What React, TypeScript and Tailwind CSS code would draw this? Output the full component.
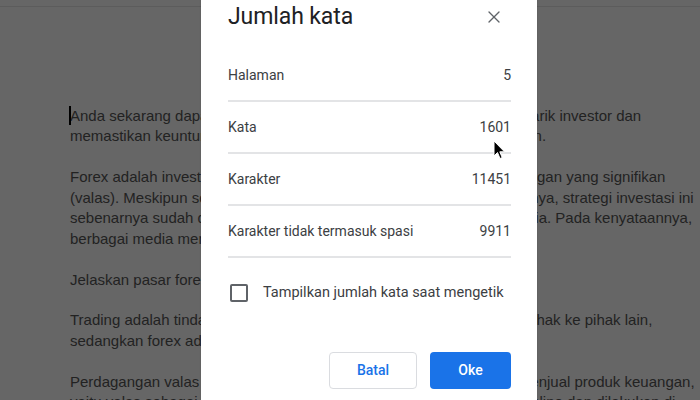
import React from 'react';
import { X } from 'lucide-react';

const paragraphs: string[][] = [
  [
    'Anda sekarang dapat memanfaatkan strategi trading forex untuk menarik investor dan',
    'memastikan keuntungan yang Anda dapat dari investasi tersebut aman.',
  ],
  [
    'Forex adalah investasi mata uang asing dengan potensi serta keuntungan yang signifikan',
    '(valas). Meskipun sering dianggap berisiko untuk sebagian orang lainnya, strategi investasi ini',
    'sebenarnya sudah dikenal sejak dahulu oleh para pelaku pasar di dunia. Pada kenyataannya,',
    'berbagai media membahas forex secara luas.',
  ],
  ['Jelaskan pasar forex secara singkat.'],
  [
    'Trading adalah tindakan membeli dan menjual suatu aset dari suatu pihak ke pihak lain,',
    'sedangkan forex adalah pasar untuk mata uang.',
  ],
  [
    'Perdagangan valas adalah kegiatan di mana investor membeli dan menjual produk keuangan,',
    'yaitu valas sebagai alat tukar yang diperdagangkan di pasar secara online dan dilakukan di',
  ],
];

const stats = [
  { label: 'Halaman', value: '5' },
  { label: 'Kata', value: '1601' },
  { label: 'Karakter', value: '11451' },
  { label: 'Karakter tidak termasuk spasi', value: '9911' },
];

const App: React.FC = () => {
  return (
    <div className="relative w-[700px] h-[400px] overflow-hidden bg-[#666666]">
      {/* document behind the overlay */}
      <div className="h-[7px] border-b border-[#5c5c5c]" />
      <div
        className="pl-[70px] pt-[99px] text-[15px] leading-[20.45px] text-[#222222] whitespace-nowrap"
        style={{ fontFamily: '"Liberation Sans", Arial, sans-serif' }}
      >
        {paragraphs.map((lines, i) => (
          <div key={i} className="mb-[20.45px]">
            {lines.map((line, j) => (
              <div key={j} className="relative">
                {i === 0 && j === 0 && (
                  <span className="absolute left-[-1px] top-[0px] w-[2px] h-[19px] bg-black" />
                )}
                {line}
              </div>
            ))}
          </div>
        ))}
      </div>

      {/* dialog */}
      <div
        className="absolute left-[201px] top-[-21px] w-[336px] bg-white shadow-[0_1px_2px_rgba(0,0,0,0.15)] rounded-lg pl-[27px] pr-[26px] pt-6 pb-6"
        style={{ fontFamily: 'Roboto, "Noto Sans", Arial, sans-serif' }}
      >
        <div className="flex items-center justify-between h-[28px]">
          <h2 className="text-[23px] text-[#202124] tracking-[-0.1px]">Jumlah kata</h2>
          <button className="w-5 h-5 flex items-center justify-center mr-[7px] text-[#5f6368]">
            <X size={20} strokeWidth={1.6} />
          </button>
        </div>

        <div className="mt-[19px]">
          {stats.map((s) => (
            <div
              key={s.label}
              className="flex items-center justify-between h-[52px] border-b-2 border-[#e3e4e6] text-[14px] text-[#3c4043]"
            >
              <span>{s.label}</span>
              <span>{s.value}</span>
            </div>
          ))}
        </div>

        <label className="flex items-center gap-[15px] mt-[24px] pl-[2px] text-[14.5px] text-[#3c4043]">
          <span className="w-[18px] h-[18px] rounded-[2px] border-2 border-[#5f6368]" />
          <span>Tampilkan jumlah kata saat mengetik</span>
        </label>

        <div className="flex justify-end gap-[13px] mt-[48px]">
          <button className="w-[88px] h-[37px] rounded border border-[#dadce0] text-[14px] font-medium text-[#1a73e8]">
            Batal
          </button>
          <button className="w-[81px] h-[37px] rounded bg-[#1a73e8] text-[14px] font-medium text-white">
            Oke
          </button>
        </div>
      </div>

      {/* mouse pointer */}
      <svg
        className="absolute left-[493px] top-[140px]"
        width="14"
        height="21"
        viewBox="0 0 14 21"
      >
        <path
          d="M1 1 L1 16 L4.5 12.5 L7 18.5 L9.2 17.6 L6.8 11.8 L11.5 11.8 Z"
          fill="#000"
          stroke="#fff"
          strokeWidth="1"
          strokeLinejoin="round"
        />
      </svg>
    </div>
  );
};

export default App;
